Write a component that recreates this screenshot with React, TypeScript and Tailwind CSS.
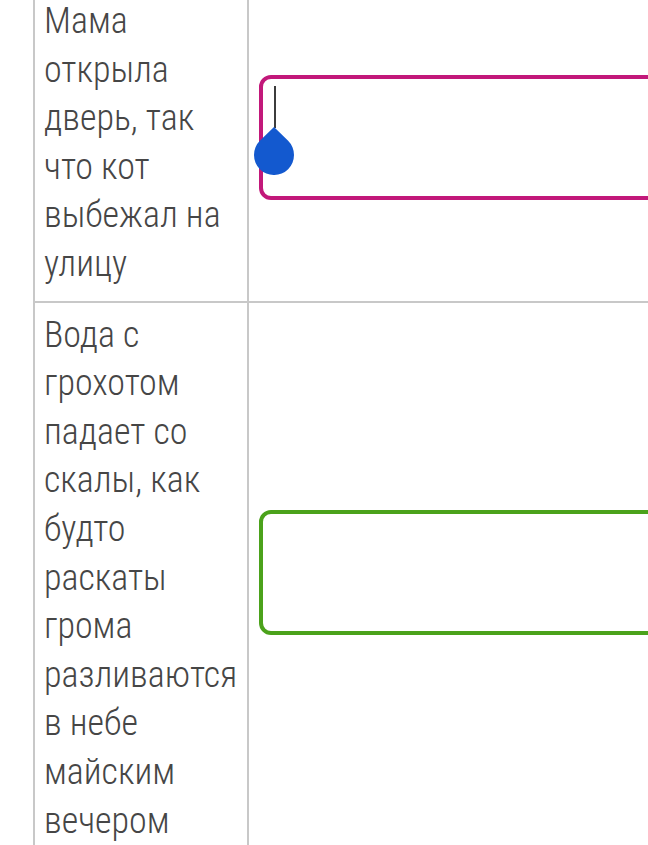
import React from 'react';

const rows = [
  {
    text: 'Мама открыла дверь, так что кот выбежал на улицу',
    color: 'border-[#c2187a]',
    focused: true,
    pad: 'pt-[10px] pb-[12px]',
  },
  {
    text: 'Вода с грохотом падает со скалы, как будто раскаты грома разливаются в небе майским вечером',
    color: 'border-[#4ba21b]',
    focused: false,
    pad: 'pt-[8px] pb-[10px]',
  },
];

const Handle: React.FC = () => (
  <>
    <span className="absolute left-[11px] top-[7px] h-[42px] w-[2px] bg-[#3c3c3c]" />
    <svg className="absolute left-[-9px] top-[48px]" width="40" height="48" viewBox="0 0 40 48">
      <path d="M20 0 L34.14 13.86 A20 20 0 1 1 5.86 13.86 Z" fill="#1359cf" />
    </svg>
  </>
);

export default function App() {
  return (
    <div className="h-[845px] w-[648px] overflow-hidden bg-white">
      <div className="ml-[33px] mt-[-13px] w-[760px] font-['Roboto',sans-serif] font-light font-stretch-condensed text-[36px] leading-[48.6px] text-[#464646]">
        {rows.map((row, i) => (
          <div key={i} className="flex border-b-2 border-[#c8c8c8]">
            <div className={`w-[216px] shrink-0 border-x-2 border-[#c8c8c8] pl-[9px] pr-[6px] ${row.pad}`}>
              {row.text}
            </div>
            <div className="flex flex-1 items-center pl-[10px]">
              <div className={`relative mb-[12px] h-[125px] w-full rounded-xl border-4 ${row.color}`}>
                {row.focused && <Handle />}
              </div>
            </div>
          </div>
        ))}
      </div>
    </div>
  );
}
